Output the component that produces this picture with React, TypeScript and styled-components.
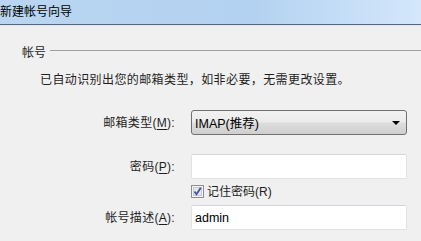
import styled, { createGlobalStyle } from 'styled-components';

const GlobalStyle = createGlobalStyle`
  html, body {
    margin: 0;
    padding: 0;
    background: #f0f0f0;
    overflow: hidden;
  }
  body {
    font-family: 'Liberation Sans', 'Noto Sans CJK SC', sans-serif;
    font-size: 12px;
    color: #1e1e1e;
  }
`;

const App = () => {
  return (
    <>
      <GlobalStyle />
      <Window>
        <TitleBar>新建帐号向导</TitleBar>
        <Body>
          <SectionHead>
            <SectionTitle>帐号</SectionTitle>
            <SectionLine />
          </SectionHead>
          <Intro>已自动识别出您的邮箱类型，如非必要，无需更改设置。</Intro>
          <Row top={22}>
            <Label>
              邮箱类型(<u>M</u>):
            </Label>
            <Select>
              <span>IMAP(推荐)</span>
              <Arrow />
            </Select>
          </Row>
          <Row top={19}>
            <Label>
              密码(<u>P</u>):
            </Label>
            <Input />
          </Row>
          <Row top={6}>
            <span />
            <CheckRow>
              <CheckBox viewBox="0 0 13 13">
                <rect x="0.5" y="0.5" width="12" height="12" fill="#f4f4f4" stroke="#8e8f8f" />
                <rect x="2.5" y="2.5" width="8" height="8" fill="#e6e8ec" stroke="#c5c9d0" />
                <path d="M3.5 6.5 L5.5 9.2 L9.8 2.8" fill="none" stroke="#3d52a8" strokeWidth="1.8" />
              </CheckBox>
              <span>记住密码(R)</span>
            </CheckRow>
          </Row>
          <Row top={7}>
            <Label>
              帐号描述(<u>A</u>):
            </Label>
            <Input>admin</Input>
          </Row>
        </Body>
      </Window>
    </>
  );
};

const Window = styled.div`
  width: 421px;
  height: 241px;
  display: flex;
  flex-direction: column;
`;

const TitleBar = styled.div`
  height: 24px;
  line-height: 24px;
  padding-left: 0;
  font-size: 12px;
  color: #000;
  background: linear-gradient(90deg, #b9d5f1 0%, #b3d2f1 60%, #d4e7fb 100%);
  border-bottom: 1px solid #56667c;
  box-shadow: 0 1px 0 #e2e6ec;
  white-space: nowrap;
`;

const Body = styled.div`
  display: flex;
  flex-direction: column;
`;

const SectionHead = styled.div`
  margin-top: 19px;
  height: 16px;
  display: flex;
  align-items: center;
  padding-left: 22px;
`;

const SectionTitle = styled.span`
  line-height: 16px;
  margin-top: 2px;
`;

const SectionLine = styled.div`
  flex: 1;
  height: 1px;
  margin-left: 4px;
  margin-top: -4px;
  background: #a0a0a0;
`;

const Intro = styled.div`
  margin-top: 12px;
  padding-left: 40px;
  line-height: 16px;
  letter-spacing: 0.4px;
  white-space: nowrap;
`;

const Row = styled.div<{ top: number }>`
  margin-top: ${({ top }) => top}px;
  display: grid;
  grid-template-columns: 175px 216px;
  column-gap: 16px;
  align-items: center;
`;

const Label = styled.span`
  text-align: right;
  line-height: 16px;
  letter-spacing: 0.3px;
  u {
    text-underline-offset: 2px;
  }
`;

const Select = styled.div`
  height: 25px;
  box-sizing: border-box;
  border: 1px solid #707070;
  border-radius: 3px;
  background: linear-gradient(180deg, #f2f2f2 0%, #ebebeb 48%, #dddddd 52%, #cfcfcf 100%);
  display: flex;
  align-items: center;
  justify-content: space-between;
  padding: 0 6px 0 3px;
  font-size: 12.5px;
  color: #000;
`;

const Arrow = styled.span`
  width: 0;
  height: 0;
  border-left: 4px solid transparent;
  border-right: 4px solid transparent;
  border-top: 4px solid #000;
`;

const Input = styled.div`
  height: 25px;
  box-sizing: border-box;
  border: 1px solid #dfe3e8;
  border-top-color: #d2d6dc;
  border-radius: 2px;
  background: #fff;
  display: flex;
  align-items: center;
  padding-left: 3px;
  font-size: 12.5px;
  color: #000;
`;

const CheckRow = styled.div`
  height: 13px;
  display: flex;
  align-items: center;
  gap: 3px;
  line-height: 16px;
`;

const CheckBox = styled.svg`
  width: 13px;
  height: 13px;
  flex: none;
`;

export default App;
